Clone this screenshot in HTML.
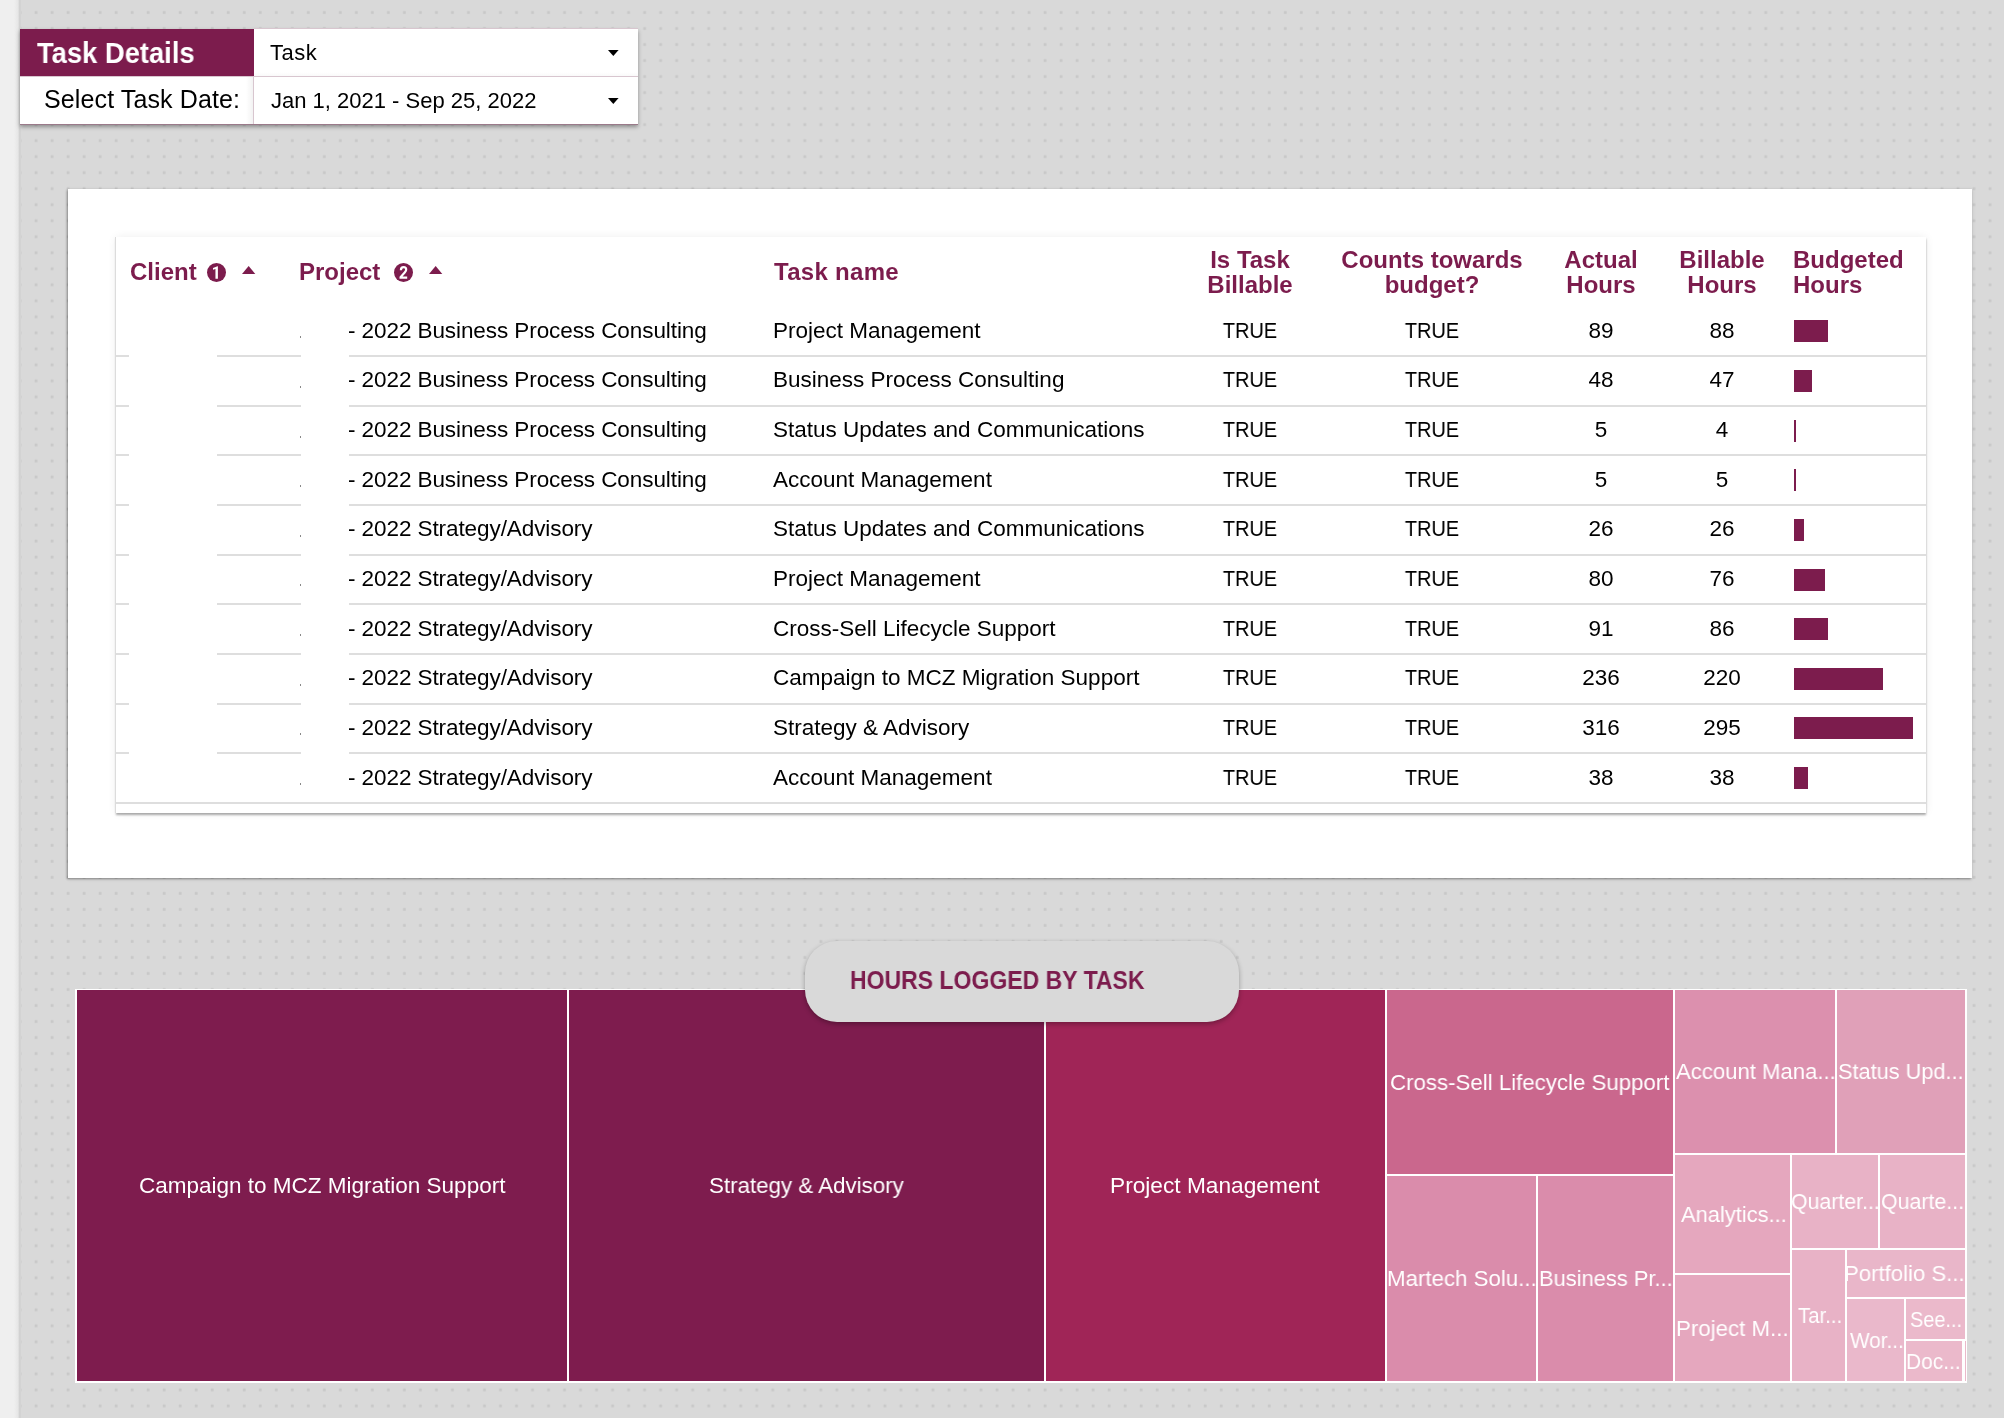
<!DOCTYPE html>
<html><head><meta charset="utf-8"><title>Task Details</title>
<style>
html,body{margin:0;padding:0;width:2004px;height:1418px;overflow:hidden;}
body{background:#d9d9d9;position:relative;font-family:"Liberation Sans",sans-serif;}
.a{position:absolute;}
.t{position:absolute;white-space:nowrap;line-height:1;will-change:transform;}
</style></head><body>
<svg class="a" style="left:0;top:0" width="2004" height="1418"><defs><pattern id="dp" patternUnits="userSpaceOnUse" x="0" y="0" width="16.016" height="16.016"><rect x="2.6" y="11.1" width="2.8" height="2.8" fill="#c8c8c8"/></pattern></defs><rect width="2004" height="1418" fill="url(#dp)"/></svg>
<div class="a" style="left:0;top:0;width:19.5px;height:1418px;background:linear-gradient(90deg,#efefef 0,#efefef 14px,#e6e6e6 18px,#d2d2d2 19.5px)"></div>
<div class="a" style="left:19.50px;top:0.00px;width:1.00px;height:1418.00px;background:#d3d3d3;"></div>
<div class="a" style="left:20px;top:28.5px;width:618px;height:96px;background:#fff;box-shadow:0 2px 4px rgba(0,0,0,0.35)"></div>
<div class="a" style="left:20.00px;top:28.50px;width:234.00px;height:48.00px;background:#7c1c4d;"></div>
<div class="a" style="left:254.00px;top:28.00px;width:384.00px;height:1.00px;background:#d8c6cf;"></div>
<div class="a" style="left:20.00px;top:76.00px;width:618.00px;height:1.00px;background:#d8c6cf;"></div>
<div class="a" style="left:253.20px;top:77.00px;width:1.00px;height:47.50px;background:#d8c6cf;"></div>
<div class="a" style="left:20.00px;top:123.80px;width:618.00px;height:1.00px;background:#9a7a8a;"></div>
<div class="t" style="left:36.80px;top:39.05px;font-size:29px;color:#fff;font-weight:bold;transform-origin:0 0;transform:scaleX(0.943);">Task Details</div>
<div class="t" style="left:269.50px;top:42.18px;font-size:22px;color:#000;letter-spacing:0.5px;">Task</div>
<div class="t" style="left:44.40px;top:86.84px;font-size:25px;color:#000;letter-spacing:0.12px;">Select Task Date:</div>
<div class="a" style="left:246.00px;top:77.00px;width:7.20px;height:46.80px;background:linear-gradient(90deg, rgba(0,0,0,0), rgba(0,0,0,0.05));"></div>
<div class="a" style="left:254.20px;top:71.50px;width:383.80px;height:4.50px;background:linear-gradient(180deg, rgba(0,0,0,0), rgba(0,0,0,0.025));"></div>
<div class="t" style="left:270.50px;top:89.88px;font-size:22px;color:#000;">Jan 1, 2021 - Sep 25, 2022</div>
<svg class="a" style="left:608.4px;top:49.6px" width="11" height="6"><path d="M0 0 L10.6 0 L5.3 5.9 Z" fill="#000"/></svg>
<svg class="a" style="left:608.4px;top:97.8px" width="11" height="6"><path d="M0 0 L10.6 0 L5.3 5.9 Z" fill="#000"/></svg>
<div class="a" style="left:68px;top:188.5px;width:1904px;height:689.5px;background:#fff;box-shadow:-1px 1px 2px rgba(0,0,0,0.33), 0 1px 4px rgba(0,0,0,0.12)"></div>
<div class="a" style="left:115.5px;top:237px;width:1810.5px;height:576px;background:#fff;box-shadow:0 1.5px 2px rgba(0,0,0,0.32), 0 0 9px rgba(0,0,0,0.07)"></div>
<div class="t" style="left:129.50px;top:259.58px;font-size:24px;color:#7c1c4d;font-weight:bold;">Client</div>
<div class="t" style="left:299.20px;top:259.58px;font-size:24px;color:#7c1c4d;font-weight:bold;">Project</div>
<div class="t" style="left:774.00px;top:259.58px;font-size:24px;color:#7c1c4d;font-weight:bold;letter-spacing:0.3px;">Task name</div>
<svg class="a" style="left:207.35px;top:263.3px" width="19" height="19"><circle cx="9.5" cy="9.5" r="9.5" fill="#7c1c4d"/><path d="M8.45 15.8 L10.9 15.8 L10.9 3.2 L10.5 3.2 L6.0 4.9 L6.0 6.7 L8.45 5.9 Z" fill="#fff"/></svg>
<svg class="a" style="left:394px;top:263.3px" width="19" height="19"><circle cx="9.5" cy="9.5" r="9.5" fill="#7c1c4d"/><path d="M6.9 7.2 C6.9 5.0 8.2 4.2 9.6 4.2 C11.2 4.2 12.2 5.2 12.2 6.6 C12.2 7.7 11.6 8.5 10.7 9.5 L6.6 14.1 L6.6 14.7 L13.2 14.7" fill="none" stroke="#fff" stroke-width="2.2" stroke-linejoin="miter"/></svg>
<svg class="a" style="left:242.4px;top:266.1px" width="14" height="9"><path d="M0 8 L13.3 8 L6.65 0 Z" fill="#7c1c4d"/></svg>
<svg class="a" style="left:428.9px;top:266.1px" width="14" height="9"><path d="M0 8 L13.3 8 L6.65 0 Z" fill="#7c1c4d"/></svg>
<div class="t" style="left:1249.50px;transform:translateX(-50%);top:247.58px;font-size:24px;color:#7c1c4d;font-weight:bold;">Is Task</div>
<div class="t" style="left:1249.50px;transform:translateX(-50%);top:273.18px;font-size:24px;color:#7c1c4d;font-weight:bold;">Billable</div>
<div class="t" style="left:1431.50px;transform:translateX(-50%);top:247.58px;font-size:24px;color:#7c1c4d;font-weight:bold;">Counts towards</div>
<div class="t" style="left:1431.50px;transform:translateX(-50%);top:273.18px;font-size:24px;color:#7c1c4d;font-weight:bold;">budget?</div>
<div class="t" style="left:1600.50px;transform:translateX(-50%);top:247.58px;font-size:24px;color:#7c1c4d;font-weight:bold;">Actual</div>
<div class="t" style="left:1600.50px;transform:translateX(-50%);top:273.18px;font-size:24px;color:#7c1c4d;font-weight:bold;">Hours</div>
<div class="t" style="left:1721.50px;transform:translateX(-50%);top:247.58px;font-size:24px;color:#7c1c4d;font-weight:bold;">Billable</div>
<div class="t" style="left:1721.50px;transform:translateX(-50%);top:273.18px;font-size:24px;color:#7c1c4d;font-weight:bold;">Hours</div>
<div class="t" style="left:1793.00px;top:247.58px;font-size:24px;color:#7c1c4d;font-weight:bold;">Budgeted</div>
<div class="t" style="left:1793.00px;top:273.18px;font-size:24px;color:#7c1c4d;font-weight:bold;">Hours</div>
<div class="t" style="left:347.90px;top:319.65px;font-size:22.5px;color:#000;letter-spacing:-0.08px;">- 2022 Business Process Consulting</div>
<div class="t" style="left:772.60px;top:319.65px;font-size:22.5px;color:#000;">Project Management</div>
<div class="t" style="left:1249.70px;transform:translateX(-50%);top:319.65px;font-size:22.5px;color:#000;transform:translateX(-50%) scaleX(0.885);">TRUE</div>
<div class="t" style="left:1431.60px;transform:translateX(-50%);top:319.65px;font-size:22.5px;color:#000;transform:translateX(-50%) scaleX(0.885);">TRUE</div>
<div class="t" style="left:1600.60px;transform:translateX(-50%);top:319.65px;font-size:22.5px;color:#000;">89</div>
<div class="t" style="left:1721.60px;transform:translateX(-50%);top:319.65px;font-size:22.5px;color:#000;">88</div>
<div class="a" style="left:1794.00px;top:320.25px;width:33.50px;height:22.00px;background:#7c1c4d;"></div>
<div class="a" style="left:115.50px;top:355.10px;width:13.50px;height:2.00px;background:#dedede;"></div>
<div class="a" style="left:217.00px;top:355.10px;width:83.80px;height:2.00px;background:#dedede;"></div>
<div class="a" style="left:349.00px;top:355.10px;width:1576.50px;height:2.00px;background:#dedede;"></div>
<div class="a" style="left:300.10px;top:336.20px;width:0.80px;height:2.00px;background:#888;"></div>
<div class="t" style="left:347.90px;top:369.30px;font-size:22.5px;color:#000;letter-spacing:-0.08px;">- 2022 Business Process Consulting</div>
<div class="t" style="left:772.60px;top:369.30px;font-size:22.5px;color:#000;">Business Process Consulting</div>
<div class="t" style="left:1249.70px;transform:translateX(-50%);top:369.30px;font-size:22.5px;color:#000;transform:translateX(-50%) scaleX(0.885);">TRUE</div>
<div class="t" style="left:1431.60px;transform:translateX(-50%);top:369.30px;font-size:22.5px;color:#000;transform:translateX(-50%) scaleX(0.885);">TRUE</div>
<div class="t" style="left:1600.60px;transform:translateX(-50%);top:369.30px;font-size:22.5px;color:#000;">48</div>
<div class="t" style="left:1721.60px;transform:translateX(-50%);top:369.30px;font-size:22.5px;color:#000;">47</div>
<div class="a" style="left:1794.00px;top:369.90px;width:18.00px;height:22.00px;background:#7c1c4d;"></div>
<div class="a" style="left:115.50px;top:404.75px;width:13.50px;height:2.00px;background:#dedede;"></div>
<div class="a" style="left:217.00px;top:404.75px;width:83.80px;height:2.00px;background:#dedede;"></div>
<div class="a" style="left:349.00px;top:404.75px;width:1576.50px;height:2.00px;background:#dedede;"></div>
<div class="a" style="left:300.10px;top:385.85px;width:0.80px;height:2.00px;background:#888;"></div>
<div class="t" style="left:347.90px;top:418.95px;font-size:22.5px;color:#000;letter-spacing:-0.08px;">- 2022 Business Process Consulting</div>
<div class="t" style="left:772.60px;top:418.95px;font-size:22.5px;color:#000;">Status Updates and Communications</div>
<div class="t" style="left:1249.70px;transform:translateX(-50%);top:418.95px;font-size:22.5px;color:#000;transform:translateX(-50%) scaleX(0.885);">TRUE</div>
<div class="t" style="left:1431.60px;transform:translateX(-50%);top:418.95px;font-size:22.5px;color:#000;transform:translateX(-50%) scaleX(0.885);">TRUE</div>
<div class="t" style="left:1600.60px;transform:translateX(-50%);top:418.95px;font-size:22.5px;color:#000;">5</div>
<div class="t" style="left:1721.60px;transform:translateX(-50%);top:418.95px;font-size:22.5px;color:#000;">4</div>
<div class="a" style="left:1794.00px;top:419.55px;width:2.30px;height:22.00px;background:#7c1c4d;"></div>
<div class="a" style="left:115.50px;top:454.40px;width:13.50px;height:2.00px;background:#dedede;"></div>
<div class="a" style="left:217.00px;top:454.40px;width:83.80px;height:2.00px;background:#dedede;"></div>
<div class="a" style="left:349.00px;top:454.40px;width:1576.50px;height:2.00px;background:#dedede;"></div>
<div class="a" style="left:300.10px;top:435.50px;width:0.80px;height:2.00px;background:#888;"></div>
<div class="t" style="left:347.90px;top:468.60px;font-size:22.5px;color:#000;letter-spacing:-0.08px;">- 2022 Business Process Consulting</div>
<div class="t" style="left:772.60px;top:468.60px;font-size:22.5px;color:#000;">Account Management</div>
<div class="t" style="left:1249.70px;transform:translateX(-50%);top:468.60px;font-size:22.5px;color:#000;transform:translateX(-50%) scaleX(0.885);">TRUE</div>
<div class="t" style="left:1431.60px;transform:translateX(-50%);top:468.60px;font-size:22.5px;color:#000;transform:translateX(-50%) scaleX(0.885);">TRUE</div>
<div class="t" style="left:1600.60px;transform:translateX(-50%);top:468.60px;font-size:22.5px;color:#000;">5</div>
<div class="t" style="left:1721.60px;transform:translateX(-50%);top:468.60px;font-size:22.5px;color:#000;">5</div>
<div class="a" style="left:1794.00px;top:469.20px;width:1.50px;height:22.00px;background:#7c1c4d;"></div>
<div class="a" style="left:115.50px;top:504.05px;width:13.50px;height:2.00px;background:#dedede;"></div>
<div class="a" style="left:217.00px;top:504.05px;width:83.80px;height:2.00px;background:#dedede;"></div>
<div class="a" style="left:349.00px;top:504.05px;width:1576.50px;height:2.00px;background:#dedede;"></div>
<div class="a" style="left:300.10px;top:485.15px;width:0.80px;height:2.00px;background:#888;"></div>
<div class="t" style="left:347.90px;top:518.25px;font-size:22.5px;color:#000;letter-spacing:-0.08px;">- 2022 Strategy/Advisory</div>
<div class="t" style="left:772.60px;top:518.25px;font-size:22.5px;color:#000;">Status Updates and Communications</div>
<div class="t" style="left:1249.70px;transform:translateX(-50%);top:518.25px;font-size:22.5px;color:#000;transform:translateX(-50%) scaleX(0.885);">TRUE</div>
<div class="t" style="left:1431.60px;transform:translateX(-50%);top:518.25px;font-size:22.5px;color:#000;transform:translateX(-50%) scaleX(0.885);">TRUE</div>
<div class="t" style="left:1600.60px;transform:translateX(-50%);top:518.25px;font-size:22.5px;color:#000;">26</div>
<div class="t" style="left:1721.60px;transform:translateX(-50%);top:518.25px;font-size:22.5px;color:#000;">26</div>
<div class="a" style="left:1794.00px;top:518.85px;width:9.50px;height:22.00px;background:#7c1c4d;"></div>
<div class="a" style="left:115.50px;top:553.70px;width:13.50px;height:2.00px;background:#dedede;"></div>
<div class="a" style="left:217.00px;top:553.70px;width:83.80px;height:2.00px;background:#dedede;"></div>
<div class="a" style="left:349.00px;top:553.70px;width:1576.50px;height:2.00px;background:#dedede;"></div>
<div class="a" style="left:300.10px;top:534.80px;width:0.80px;height:2.00px;background:#888;"></div>
<div class="t" style="left:347.90px;top:567.90px;font-size:22.5px;color:#000;letter-spacing:-0.08px;">- 2022 Strategy/Advisory</div>
<div class="t" style="left:772.60px;top:567.90px;font-size:22.5px;color:#000;">Project Management</div>
<div class="t" style="left:1249.70px;transform:translateX(-50%);top:567.90px;font-size:22.5px;color:#000;transform:translateX(-50%) scaleX(0.885);">TRUE</div>
<div class="t" style="left:1431.60px;transform:translateX(-50%);top:567.90px;font-size:22.5px;color:#000;transform:translateX(-50%) scaleX(0.885);">TRUE</div>
<div class="t" style="left:1600.60px;transform:translateX(-50%);top:567.90px;font-size:22.5px;color:#000;">80</div>
<div class="t" style="left:1721.60px;transform:translateX(-50%);top:567.90px;font-size:22.5px;color:#000;">76</div>
<div class="a" style="left:1794.00px;top:568.50px;width:30.50px;height:22.00px;background:#7c1c4d;"></div>
<div class="a" style="left:115.50px;top:603.35px;width:13.50px;height:2.00px;background:#dedede;"></div>
<div class="a" style="left:217.00px;top:603.35px;width:83.80px;height:2.00px;background:#dedede;"></div>
<div class="a" style="left:349.00px;top:603.35px;width:1576.50px;height:2.00px;background:#dedede;"></div>
<div class="a" style="left:300.10px;top:584.45px;width:0.80px;height:2.00px;background:#888;"></div>
<div class="t" style="left:347.90px;top:617.55px;font-size:22.5px;color:#000;letter-spacing:-0.08px;">- 2022 Strategy/Advisory</div>
<div class="t" style="left:772.60px;top:617.55px;font-size:22.5px;color:#000;">Cross-Sell Lifecycle Support</div>
<div class="t" style="left:1249.70px;transform:translateX(-50%);top:617.55px;font-size:22.5px;color:#000;transform:translateX(-50%) scaleX(0.885);">TRUE</div>
<div class="t" style="left:1431.60px;transform:translateX(-50%);top:617.55px;font-size:22.5px;color:#000;transform:translateX(-50%) scaleX(0.885);">TRUE</div>
<div class="t" style="left:1600.60px;transform:translateX(-50%);top:617.55px;font-size:22.5px;color:#000;">91</div>
<div class="t" style="left:1721.60px;transform:translateX(-50%);top:617.55px;font-size:22.5px;color:#000;">86</div>
<div class="a" style="left:1794.00px;top:618.15px;width:34.30px;height:22.00px;background:#7c1c4d;"></div>
<div class="a" style="left:115.50px;top:653.00px;width:13.50px;height:2.00px;background:#dedede;"></div>
<div class="a" style="left:217.00px;top:653.00px;width:83.80px;height:2.00px;background:#dedede;"></div>
<div class="a" style="left:349.00px;top:653.00px;width:1576.50px;height:2.00px;background:#dedede;"></div>
<div class="a" style="left:300.10px;top:634.10px;width:0.80px;height:2.00px;background:#888;"></div>
<div class="t" style="left:347.90px;top:667.20px;font-size:22.5px;color:#000;letter-spacing:-0.08px;">- 2022 Strategy/Advisory</div>
<div class="t" style="left:772.60px;top:667.20px;font-size:22.5px;color:#000;">Campaign to MCZ Migration Support</div>
<div class="t" style="left:1249.70px;transform:translateX(-50%);top:667.20px;font-size:22.5px;color:#000;transform:translateX(-50%) scaleX(0.885);">TRUE</div>
<div class="t" style="left:1431.60px;transform:translateX(-50%);top:667.20px;font-size:22.5px;color:#000;transform:translateX(-50%) scaleX(0.885);">TRUE</div>
<div class="t" style="left:1600.60px;transform:translateX(-50%);top:667.20px;font-size:22.5px;color:#000;">236</div>
<div class="t" style="left:1721.60px;transform:translateX(-50%);top:667.20px;font-size:22.5px;color:#000;">220</div>
<div class="a" style="left:1794.00px;top:667.80px;width:88.90px;height:22.00px;background:#7c1c4d;"></div>
<div class="a" style="left:115.50px;top:702.65px;width:13.50px;height:2.00px;background:#dedede;"></div>
<div class="a" style="left:217.00px;top:702.65px;width:83.80px;height:2.00px;background:#dedede;"></div>
<div class="a" style="left:349.00px;top:702.65px;width:1576.50px;height:2.00px;background:#dedede;"></div>
<div class="a" style="left:300.10px;top:683.75px;width:0.80px;height:2.00px;background:#888;"></div>
<div class="t" style="left:347.90px;top:716.85px;font-size:22.5px;color:#000;letter-spacing:-0.08px;">- 2022 Strategy/Advisory</div>
<div class="t" style="left:772.60px;top:716.85px;font-size:22.5px;color:#000;">Strategy &amp; Advisory</div>
<div class="t" style="left:1249.70px;transform:translateX(-50%);top:716.85px;font-size:22.5px;color:#000;transform:translateX(-50%) scaleX(0.885);">TRUE</div>
<div class="t" style="left:1431.60px;transform:translateX(-50%);top:716.85px;font-size:22.5px;color:#000;transform:translateX(-50%) scaleX(0.885);">TRUE</div>
<div class="t" style="left:1600.60px;transform:translateX(-50%);top:716.85px;font-size:22.5px;color:#000;">316</div>
<div class="t" style="left:1721.60px;transform:translateX(-50%);top:716.85px;font-size:22.5px;color:#000;">295</div>
<div class="a" style="left:1794.00px;top:717.45px;width:119.40px;height:22.00px;background:#7c1c4d;"></div>
<div class="a" style="left:115.50px;top:752.30px;width:13.50px;height:2.00px;background:#dedede;"></div>
<div class="a" style="left:217.00px;top:752.30px;width:83.80px;height:2.00px;background:#dedede;"></div>
<div class="a" style="left:349.00px;top:752.30px;width:1576.50px;height:2.00px;background:#dedede;"></div>
<div class="a" style="left:300.10px;top:733.40px;width:0.80px;height:2.00px;background:#888;"></div>
<div class="t" style="left:347.90px;top:766.50px;font-size:22.5px;color:#000;letter-spacing:-0.08px;">- 2022 Strategy/Advisory</div>
<div class="t" style="left:772.60px;top:766.50px;font-size:22.5px;color:#000;">Account Management</div>
<div class="t" style="left:1249.70px;transform:translateX(-50%);top:766.50px;font-size:22.5px;color:#000;transform:translateX(-50%) scaleX(0.885);">TRUE</div>
<div class="t" style="left:1431.60px;transform:translateX(-50%);top:766.50px;font-size:22.5px;color:#000;transform:translateX(-50%) scaleX(0.885);">TRUE</div>
<div class="t" style="left:1600.60px;transform:translateX(-50%);top:766.50px;font-size:22.5px;color:#000;">38</div>
<div class="t" style="left:1721.60px;transform:translateX(-50%);top:766.50px;font-size:22.5px;color:#000;">38</div>
<div class="a" style="left:1794.00px;top:767.10px;width:14.20px;height:22.00px;background:#7c1c4d;"></div>
<div class="a" style="left:115.50px;top:801.95px;width:1810.00px;height:2.00px;background:#dedede;"></div>
<div class="a" style="left:300.10px;top:783.05px;width:0.80px;height:2.00px;background:#888;"></div>
<div class="a" style="left:115.00px;top:237.00px;width:1.00px;height:576.00px;background:#dcdcdc;"></div>
<div class="a" style="left:805px;top:941px;width:434px;height:81px;border-radius:32px;background:#d9d9d9;box-shadow:0 2px 5px rgba(0,0,0,0.3);z-index:5"></div>
<div class="t" style="left:850.00px;top:967.49px;font-size:26px;color:#7c1c4d;font-weight:bold;z-index:6;transform-origin:0 0;transform:scaleX(0.885);">HOURS LOGGED BY TASK</div>
<div class="a" style="left:74.80px;top:989.30px;width:1892.40px;height:393.70px;background:#ffffff;"></div>
<div class="a" style="left:77.00px;top:990.40px;width:489.60px;height:390.60px;background:#7e1c4e;"></div>
<div class="t" style="left:138.90px;top:1175.15px;font-size:22.5px;color:#fff;transform-origin:0 0;transform:scaleX(0.9992);">Campaign to MCZ Migration Support</div>
<div class="a" style="left:568.60px;top:990.40px;width:475.10px;height:390.60px;background:#7e1c4e;"></div>
<div class="t" style="left:708.51px;top:1175.15px;font-size:22.5px;color:#fff;transform-origin:0 0;transform:scaleX(0.9923);">Strategy &amp; Advisory</div>
<div class="a" style="left:1045.70px;top:990.40px;width:339.10px;height:390.60px;background:#a02557;"></div>
<div class="t" style="left:1109.98px;top:1175.15px;font-size:22.5px;color:#fff;transform-origin:0 0;transform:scaleX(1.0088);">Project Management</div>
<div class="a" style="left:1386.80px;top:990.40px;width:286.00px;height:183.40px;background:#ca678d;"></div>
<div class="t" style="left:1390.31px;top:1071.55px;font-size:22.5px;color:#fff;transform-origin:0 0;transform:scaleX(0.9890);">Cross-Sell Lifecycle Support</div>
<div class="a" style="left:1386.80px;top:1175.80px;width:149.60px;height:205.20px;background:#da8cab;"></div>
<div class="t" style="left:1386.92px;top:1267.85px;font-size:22.5px;color:#fff;transform-origin:0 0;transform:scaleX(0.9898);">Martech Solu...</div>
<div class="a" style="left:1538.40px;top:1175.80px;width:134.40px;height:205.20px;background:#da8cab;"></div>
<div class="t" style="left:1539.16px;top:1267.85px;font-size:22.5px;color:#fff;transform-origin:0 0;transform:scaleX(0.9724);">Business Pr...</div>
<div class="a" style="left:1674.80px;top:990.40px;width:160.00px;height:162.70px;background:#dc90ae;"></div>
<div class="t" style="left:1675.90px;top:1061.20px;font-size:22.5px;color:#fff;transform-origin:0 0;transform:scaleX(0.9832);">Account Mana...</div>
<div class="a" style="left:1836.80px;top:990.40px;width:128.20px;height:162.70px;background:#e0a0b8;"></div>
<div class="t" style="left:1838.43px;top:1061.20px;font-size:22.5px;color:#fff;transform-origin:0 0;transform:scaleX(0.9661);">Status Upd...</div>
<div class="a" style="left:1674.80px;top:1155.10px;width:115.20px;height:118.30px;background:#e5a7be;"></div>
<div class="t" style="left:1680.50px;top:1203.70px;font-size:22.5px;color:#fff;transform-origin:0 0;transform:scaleX(0.9729);">Analytics...</div>
<div class="a" style="left:1674.80px;top:1275.40px;width:115.20px;height:105.60px;background:#e5a7be;"></div>
<div class="t" style="left:1676.12px;top:1317.65px;font-size:22.5px;color:#fff;transform-origin:0 0;transform:scaleX(0.9900);">Project M...</div>
<div class="a" style="left:1792.00px;top:1155.10px;width:86.00px;height:93.00px;background:#e8b2c6;"></div>
<div class="t" style="left:1790.65px;top:1191.05px;font-size:22.5px;color:#fff;transform-origin:0 0;transform:scaleX(0.9473);">Quarter...</div>
<div class="a" style="left:1880.00px;top:1155.10px;width:85.00px;height:93.00px;background:#e8b2c6;"></div>
<div class="t" style="left:1881.35px;top:1191.05px;font-size:22.5px;color:#fff;transform-origin:0 0;transform:scaleX(0.9494);">Quarte...</div>
<div class="a" style="left:1792.00px;top:1250.10px;width:52.50px;height:130.90px;background:#e8b2c6;"></div>
<div class="t" style="left:1797.70px;top:1305.00px;font-size:22.5px;color:#fff;transform-origin:0 0;transform:scaleX(0.9064);">Tar...</div>
<div class="a" style="left:1846.50px;top:1250.10px;width:118.50px;height:47.30px;background:#e9b6c9;"></div>
<div class="t" style="left:1844.43px;top:1263.20px;font-size:22.5px;color:#fff;transform-origin:0 0;transform:scaleX(0.9849);">Portfolio S...</div>
<div class="a" style="left:1846.50px;top:1299.40px;width:57.40px;height:81.60px;background:#eab8cb;"></div>
<div class="t" style="left:1849.50px;top:1329.65px;font-size:22.5px;color:#fff;transform-origin:0 0;transform:scaleX(0.9232);">Wor...</div>
<div class="a" style="left:1905.90px;top:1299.40px;width:59.10px;height:39.70px;background:#ebb9cb;"></div>
<div class="t" style="left:1909.71px;top:1308.70px;font-size:22.5px;color:#fff;transform-origin:0 0;transform:scaleX(0.8857);">See...</div>
<div class="a" style="left:1905.90px;top:1341.10px;width:56.60px;height:39.90px;background:#ebb9cb;"></div>
<div class="t" style="left:1906.34px;top:1350.50px;font-size:22.5px;color:#fff;transform-origin:0 0;transform:scaleX(0.9309);">Doc...</div>
<div class="a" style="left:1964.50px;top:1341.10px;width:0.50px;height:39.90px;background:#ebb9cb;"></div>
</body></html>
